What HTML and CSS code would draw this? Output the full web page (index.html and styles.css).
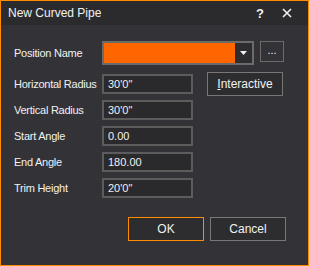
FILE: index.html
```html
<!DOCTYPE html>
<html lang="en">
<head>
    <meta charset="UTF-8">
    <link rel="stylesheet" href="styles.css">
</head>
<body>
    <div class="dialog">
        <div class="titleBar">
            <span class="title">New Curved Pipe</span>
            <span class="help">?</span>
            <span class="close">
                <svg width="10" height="10" viewBox="0 0 10 10">
                    <path d="M1 1L9 9M9 1L1 9" stroke="#f1f1f1" stroke-width="1.6"/>
                </svg>
            </span>
        </div>
        <div class="content">
            <div class="topRow">
                <span class="label">Position Name</span>
                <div class="combo">
                    <div class="comboValue"></div>
                    <div class="comboArrow">
                        <svg width="7" height="4" viewBox="0 0 7 4"><path d="M0 0H7L3.5 4Z" fill="#f1f1f1"/></svg>
                    </div>
                </div>
                <button class="smallBtn">...</button>
            </div>
            <div class="fields">
                <div class="fieldList">
                    <div class="field"><span class="label">Horizontal Radius</span><input class="textBox" value="30'0&quot;"></div>
                    <div class="field"><span class="label">Vertical Radius</span><input class="textBox" value="30'0&quot;"></div>
                    <div class="field"><span class="label">Start Angle</span><input class="textBox" value="0.00"></div>
                    <div class="field"><span class="label">End Angle</span><input class="textBox" value="180.00"></div>
                    <div class="field"><span class="label">Trim Height</span><input class="textBox" value="20'0&quot;"></div>
                </div>
                <button class="btn interactive"><u>I</u>nteractive</button>
            </div>
            <div class="buttons">
                <button class="btn ok">OK</button>
                <button class="btn">Cancel</button>
            </div>
        </div>
    </div>
</body>
</html>
```
FILE: styles.css
```css
html, body {
    margin: 0;
    padding: 0;
    background: #333337;
}

body {
    font-family: 'Liberation Sans', Arial, sans-serif;
    font-size: 11px;
    color: #f1f1f1;
}

.dialog {
    width: 307px;
    height: 264px;
    border: 1px solid #ff8c00;
    background: #333337;
    display: flex;
    flex-direction: column;
}

.titleBar {
    height: 24px;
    background: #2b2b2e;
    display: flex;
    align-items: center;
    padding-left: 7px;
}

.title {
    flex: 1;
    font-size: 12px;
}

.help {
    font-weight: bold;
    font-size: 13px;
    width: 26px;
}

.close {
    width: 26px;
    display: flex;
    align-items: center;
}

.content {
    padding: 16px 22px 0 13px;
    display: flex;
    flex-direction: column;
}

.label {
    width: 88px;
    flex-shrink: 0;
    white-space: nowrap;
    letter-spacing: -0.25px;
}

.topRow {
    display: flex;
    align-items: flex-start;
}

.topRow .label {
    line-height: 24px;
}

.combo {
    width: 148px;
    height: 20px;
    border: 2px solid #6b6b6b;
    display: flex;
}

.comboValue {
    flex: 1;
    background: #ff6600;
}

.comboArrow {
    width: 17px;
    background: #2d2d30;
    display: flex;
    align-items: center;
    justify-content: center;
}

.smallBtn {
    margin-left: 6px;
    width: 24px;
    height: 21px;
    border: 1px solid #6b6b6b;
    background: #333337;
    color: #f1f1f1;
    font-family: 'Liberation Sans', Arial, sans-serif;
    font-size: 11px;
    padding: 0 0 3px 0;
}

.fields {
    margin-top: 7px;
    display: flex;
    align-items: flex-start;
}

.fieldList {
    padding-top: 2px;
    display: flex;
    flex-direction: column;
    gap: 6px;
}

.field {
    display: flex;
    align-items: center;
    height: 20px;
}

.textBox {
    box-sizing: border-box;
    width: 91px;
    height: 20px;
    border: 2px solid #5c5c5c;
    background: #2a2a2d;
    color: #f1f1f1;
    font-family: 'Liberation Sans', Arial, sans-serif;
    font-size: 11px;
    padding: 0 4px;
    outline: none;
}

.btn {
    box-sizing: border-box;
    width: 76px;
    height: 24px;
    border: 1px solid #777777;
    background: #2d2d30;
    color: #f1f1f1;
    font-family: 'Liberation Sans', Arial, sans-serif;
    font-size: 12px;
    padding: 0;
}

.interactive {
    margin-left: 14px;
}

.buttons {
    margin-top: 19px;
    display: flex;
    justify-content: flex-end;
    gap: 6px;
}

.ok {
    border: 1px solid #ff8c00;
}
```
